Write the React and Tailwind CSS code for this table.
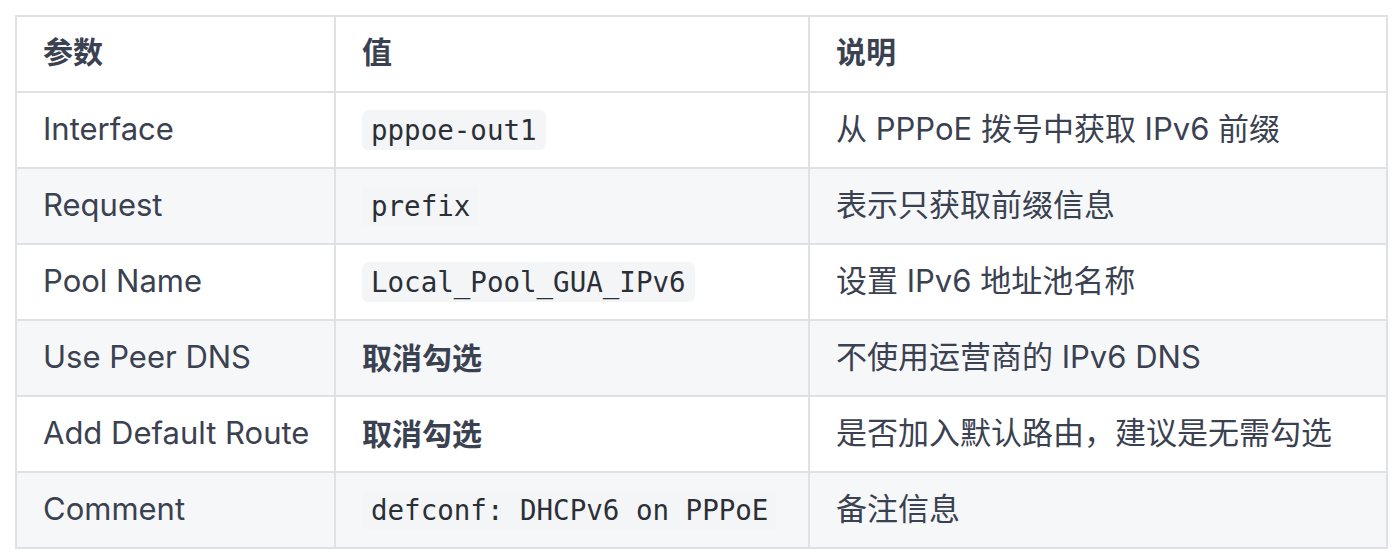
const rows = [
  { name: 'Interface', value: 'pppoe-out1', code: true, desc: '从 PPPoE 拨号中获取 IPv6 前缀' },
  { name: 'Request', value: 'prefix', code: true, desc: '表示只获取前缀信息' },
  { name: 'Pool Name', value: 'Local_Pool_GUA_IPv6', code: true, desc: '设置 IPv6 地址池名称' },
  { name: 'Use Peer DNS', value: '取消勾选', code: false, desc: '不使用运营商的 IPv6 DNS' },
  { name: 'Add Default Route', value: '取消勾选', code: false, desc: '是否加入默认路由，建议是无需勾选' },
  { name: 'Comment', value: 'defconf: DHCPv6 on PPPoE', code: true, desc: '备注信息' },
]

const sans = "font-['Inter','Noto_Sans_CJK_SC',sans-serif]"

export default function App() {
  return (
    <div className={`min-h-[560px] bg-white pl-[15px] pt-[15px] text-[31px] text-[#3a4150] ${sans}`}>
      <table className="border-collapse table-fixed w-[1371px]">
        <colgroup>
          <col className="w-[319px]" />
          <col className="w-[474px]" />
          <col className="w-[578px]" />
        </colgroup>
        <thead>
          <tr className="h-[76px]">
            {['参数', '值', '说明'].map((h) => (
              <th key={h} className="border-2 border-[#dfe1e5] px-[26px] pb-[3px] text-left text-[30px] font-bold">
                {h}
              </th>
            ))}
          </tr>
        </thead>
        <tbody>
          {rows.map((row, i) => (
            <tr key={row.name} className={`h-[76px] ${i % 2 === 1 ? 'bg-[#f6f7f9]' : 'bg-white'}`}>
              <td className="border-2 border-[#dfe1e5] px-[26px] pb-[3px] whitespace-nowrap leading-none">{row.name}</td>
              <td className="border-2 border-[#dfe1e5] px-[26px] pb-[1px] leading-none">
                {row.code ? (
                  <code className="inline-block rounded-md bg-[#f4f5f7] px-[9px] py-[6px] font-['DejaVu_Sans_Mono',monospace] text-[27.5px] leading-[28px] text-[#2b2f36]">
                    {row.value}
                  </code>
                ) : (
                  <span className="font-bold text-[30px]">{row.value}</span>
                )}
              </td>
              <td className="border-2 border-[#dfe1e5] px-[26px] pb-[3px] whitespace-nowrap leading-none">{row.desc}</td>
            </tr>
          ))}
        </tbody>
      </table>
    </div>
  )
}
